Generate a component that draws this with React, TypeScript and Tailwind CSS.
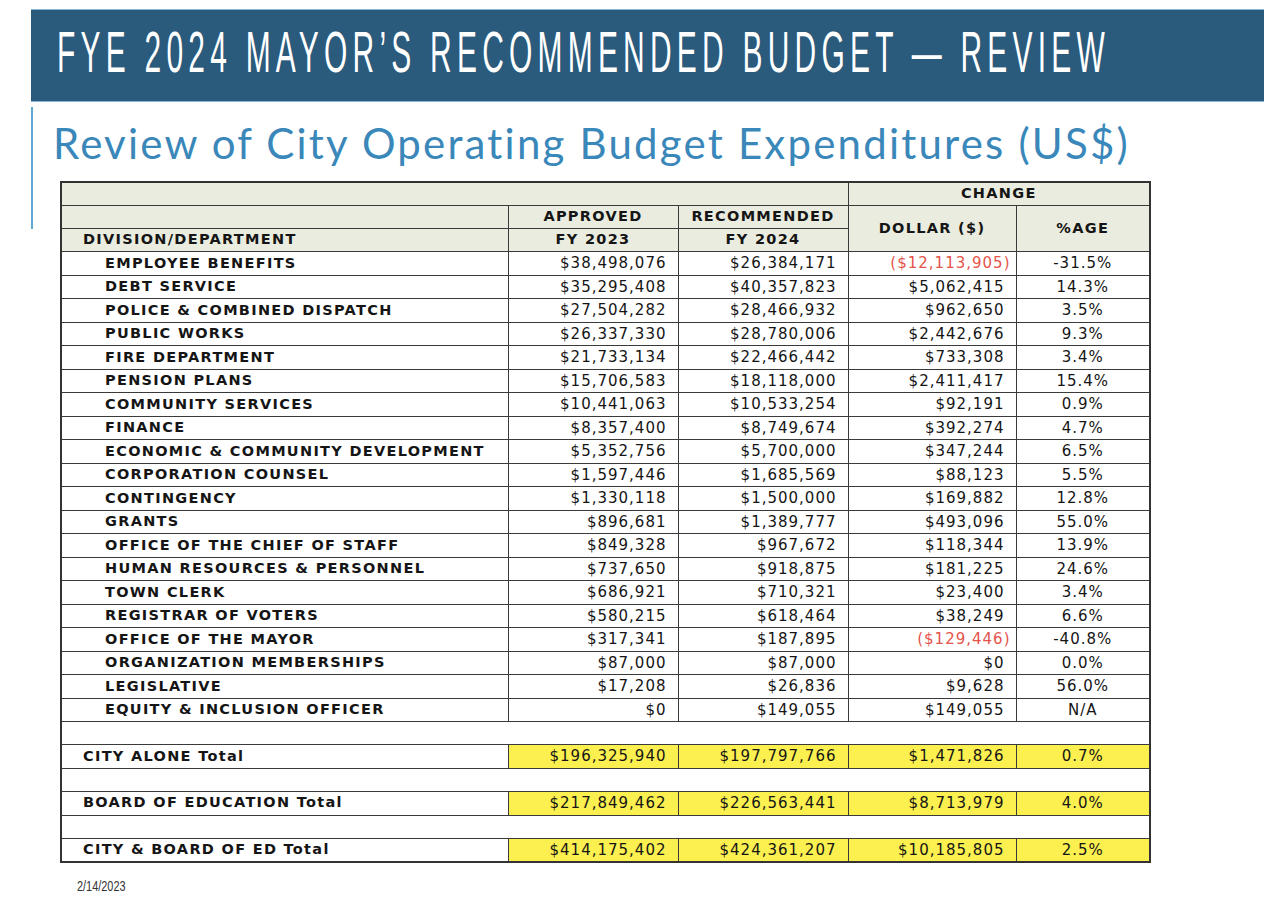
type Row = [string, string, string, string, string];

// department rows, in slide order
const departments: Row[] = [
  ['EMPLOYEE BENEFITS', '$38,498,076', '$26,384,171', '($12,113,905)', '-31.5%'],
  ['DEBT SERVICE', '$35,295,408', '$40,357,823', '$5,062,415', '14.3%'],
  ['POLICE & COMBINED DISPATCH', '$27,504,282', '$28,466,932', '$962,650', '3.5%'],
  ['PUBLIC WORKS', '$26,337,330', '$28,780,006', '$2,442,676', '9.3%'],
  ['FIRE DEPARTMENT', '$21,733,134', '$22,466,442', '$733,308', '3.4%'],
  ['PENSION PLANS', '$15,706,583', '$18,118,000', '$2,411,417', '15.4%'],
  ['COMMUNITY SERVICES', '$10,441,063', '$10,533,254', '$92,191', '0.9%'],
  ['FINANCE', '$8,357,400', '$8,749,674', '$392,274', '4.7%'],
  ['ECONOMIC & COMMUNITY DEVELOPMENT', '$5,352,756', '$5,700,000', '$347,244', '6.5%'],
  ['CORPORATION COUNSEL', '$1,597,446', '$1,685,569', '$88,123', '5.5%'],
  ['CONTINGENCY', '$1,330,118', '$1,500,000', '$169,882', '12.8%'],
  ['GRANTS', '$896,681', '$1,389,777', '$493,096', '55.0%'],
  ['OFFICE OF THE CHIEF OF STAFF', '$849,328', '$967,672', '$118,344', '13.9%'],
  ['HUMAN RESOURCES & PERSONNEL', '$737,650', '$918,875', '$181,225', '24.6%'],
  ['TOWN CLERK', '$686,921', '$710,321', '$23,400', '3.4%'],
  ['REGISTRAR OF VOTERS', '$580,215', '$618,464', '$38,249', '6.6%'],
  ['OFFICE OF THE MAYOR', '$317,341', '$187,895', '($129,446)', '-40.8%'],
  ['ORGANIZATION MEMBERSHIPS', '$87,000', '$87,000', '$0', '0.0%'],
  ['LEGISLATIVE', '$17,208', '$26,836', '$9,628', '56.0%'],
  ['EQUITY & INCLUSION OFFICER', '$0', '$149,055', '$149,055', 'N/A'],
];

const totals: Row[] = [
  ['CITY ALONE Total', '$196,325,940', '$197,797,766', '$1,471,826', '0.7%'],
  ['BOARD OF EDUCATION Total', '$217,849,462', '$226,563,441', '$8,713,979', '4.0%'],
  ['CITY & BOARD OF ED Total', '$414,175,402', '$424,361,207', '$10,185,805', '2.5%'],
];

const cell = 'border border-[#3a3a3a] p-0';
const label = 'font-bold tracking-[1.3px] text-[14.5px]';
const head = `bg-[#e9ecdf] ${label}`;
const num = 'text-right tracking-[1px]';
const rowH = 'h-[23.2px]';

function Money({ value, yellow }: { value: string; yellow?: boolean }) {
  const negative = value.startsWith('(');
  return (
    <td
      className={`${cell} ${num} ${yellow ? 'bg-[#fbf04f]' : ''} ${
        negative ? 'pr-[5px] text-[#e5534b]' : 'pr-[11px]'
      }`}
    >
      {value}
    </td>
  );
}

function DeptRow({ row }: { row: Row }) {
  const [name, approved, recommended, dollar, pct] = row;
  return (
    <tr className={rowH}>
      <td className={`${cell} ${label} pl-[43px]`}>{name}</td>
      <Money value={approved} />
      <Money value={recommended} />
      <Money value={dollar} />
      <td className={`${cell} text-center tracking-[1px]`}>{pct}</td>
    </tr>
  );
}

function Spacer() {
  return (
    <tr className={rowH}>
      <td colSpan={5} className={cell} />
    </tr>
  );
}

function TotalRow({ row }: { row: Row }) {
  const [name, approved, recommended, dollar, pct] = row;
  return (
    <tr className={rowH}>
      <td className={`${cell} ${label} pl-[21px]`}>{name}</td>
      <Money value={approved} yellow />
      <Money value={recommended} yellow />
      <Money value={dollar} yellow />
      <td className={`${cell} bg-[#fbf04f] text-center tracking-[1px]`}>{pct}</td>
    </tr>
  );
}

export default function App() {
  return (
    <div className="w-[1264px] h-[914px] overflow-hidden bg-white">
      {/* slide title bar */}
      <div className="mt-[9px] ml-[31px] h-[93px] pl-[26px] bg-[#2a5a7c] border-y border-[#86b7d8] flex items-center pb-[6px] overflow-hidden">
        <h1
          className="whitespace-nowrap origin-left scale-x-[0.525] text-[57px] leading-none text-white tracking-[10px]"
          style={{ fontFamily: '"Liberation Sans", Arial, sans-serif' }}
        >
          FYE 2024 MAYOR’S RECOMMENDED BUDGET — REVIEW
        </h1>
      </div>

      <div className="flex">
        <div className="ml-[31px] mt-[5px] w-[2px] h-[122px] bg-[#62a6d6] shrink-0" />
        <div className="flex flex-col">
          <h2
            className="ml-[20px] mt-[16px] text-[42px] leading-[50px] text-[#3a87ba] tracking-[2.2px] whitespace-nowrap"
            style={{ fontFamily: 'Lato, "Noto Sans", sans-serif' }}
          >
            Review of City Operating Budget Expenditures (US$)
          </h2>

          <table
            className="ml-[27px] mt-[13px] w-[1089px] table-fixed border-collapse border-2 border-[#333] text-[15px] text-[#151515]"
            style={{ fontFamily: '"DejaVu Sans", Verdana, sans-serif' }}
          >
            <colgroup>
              <col className="w-[447px]" />
              <col className="w-[170px]" />
              <col className="w-[170px]" />
              <col className="w-[168px]" />
              <col className="w-[134px]" />
            </colgroup>
            <thead>
              <tr className={rowH}>
                <td colSpan={3} className={`${cell} ${head}`} />
                <td colSpan={2} className={`${cell} ${head} text-center`}>CHANGE</td>
              </tr>
              <tr className={rowH}>
                <td className={`${cell} ${head}`} />
                <td className={`${cell} ${head} text-center`}>APPROVED</td>
                <td className={`${cell} ${head} text-center`}>RECOMMENDED</td>
                <td rowSpan={2} className={`${cell} ${head} text-center`}>DOLLAR ($)</td>
                <td rowSpan={2} className={`${cell} ${head} text-center`}>%AGE</td>
              </tr>
              <tr className={rowH}>
                <td className={`${cell} ${head} pl-[21px]`}>DIVISION/DEPARTMENT</td>
                <td className={`${cell} ${head} text-center`}>FY 2023</td>
                <td className={`${cell} ${head} text-center`}>FY 2024</td>
              </tr>
            </thead>
            <tbody>
              {departments.map((row) => (
                <DeptRow key={row[0]} row={row} />
              ))}
              {totals.flatMap((row) => [
                <Spacer key={`gap-${row[0]}`} />,
                <TotalRow key={row[0]} row={row} />,
              ])}
            </tbody>
          </table>
        </div>
      </div>

      <div
        className="ml-[77px] mt-[13px] whitespace-nowrap origin-left scale-x-[0.78] text-[14px] text-[#333]"
        style={{ fontFamily: '"Liberation Sans", Arial, sans-serif' }}
      >
        2/14/2023
      </div>
    </div>
  );
}
